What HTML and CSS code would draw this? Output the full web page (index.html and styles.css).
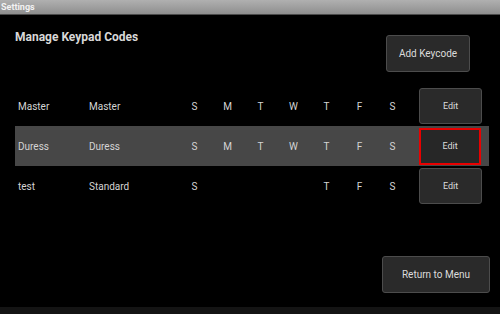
FILE: index.html
```html
<!DOCTYPE html>
<html lang="en">
<head>
    <meta charset="UTF-8">
    <title>Settings</title>
    <link rel="stylesheet" href="styles.css">
</head>
<body>
    <div class="screen">
        <div class="titlebar">Settings</div>

        <div class="header">
            <h1>Manage Keypad Codes</h1>
            <button class="btn btn-add">Add Keycode</button>
        </div>

        <!-- Lista de códigos -->
        <div class="codes">
            <div class="row">
                <span class="name">Master</span>
                <span class="type">Master</span>
                <span class="day">S</span><span class="day">M</span><span class="day">T</span><span class="day">W</span><span class="day">T</span><span class="day">F</span><span class="day">S</span>
                <button class="btn btn-edit">Edit</button>
            </div>
            <div class="row selected">
                <span class="name">Duress</span>
                <span class="type">Duress</span>
                <span class="day">S</span><span class="day">M</span><span class="day">T</span><span class="day">W</span><span class="day">T</span><span class="day">F</span><span class="day">S</span>
                <button class="btn btn-edit">Edit</button>
            </div>
            <div class="row">
                <span class="name">test</span>
                <span class="type">Standard</span>
                <span class="day">S</span><span class="day"></span><span class="day"></span><span class="day"></span><span class="day">T</span><span class="day">F</span><span class="day">S</span>
                <button class="btn btn-edit">Edit</button>
            </div>
        </div>

        <div class="footer">
            <button class="btn btn-return">Return to Menu</button>
        </div>

        <div class="bottombar"></div>
    </div>
</body>
</html>
```

FILE: styles.css
```css
body {
    margin: 0;
    background: #000;
    font-family: Roboto, "Liberation Sans", sans-serif;
    color: #d4d4d4;
}
.screen {
    width: 500px;
    height: 314px;
    display: flex;
    flex-direction: column;
    overflow: hidden;
}
.titlebar {
    height: 14px;
    line-height: 14px;
    border-bottom: 1px solid #4a4a4a;
    background: linear-gradient(#b0b0b0, #8e8e8e);
    color: #f2f2f2;
    font-size: 9px;
    font-weight: bold;
    padding-left: 1px;
}
.header {
    display: flex;
    justify-content: space-between;
    align-items: flex-start;
    padding: 15px 30px 0 15px;
}
h1 {
    margin: 0;
    font-size: 12px;
    line-height: 14px;
    font-weight: bold;
    color: #d8d8d8;
}
.btn {
    background: #2a2a2a;
    border: 1px solid #4c4c4c;
    border-radius: 3px;
    color: #dcdcdc;
    font-family: Roboto, "Liberation Sans", sans-serif;
    padding: 0;
    cursor: pointer;
}
.btn-add {
    margin-top: 5px;
    width: 84px;
    height: 37px;
    font-size: 10px;
}
.codes {
    margin: 14px 11px 0 15px;
}
.row {
    display: grid;
    grid-template-columns: 71px 89px repeat(7, 33px) 63px;
    align-items: center;
    height: 40px;
    padding-left: 3px;
    font-size: 10px;
}
.row .btn-edit {
    margin-left: 10px;
}
.day {
    text-align: center;
}
.selected {
    background: #474747;
}
.btn-edit {
    width: 63px;
    height: 36px;
    font-size: 9px;
}
.selected .btn-edit {
    width: 62px;
    height: 37px;
    border: 2px solid #e80000;
    border-radius: 0;
    background: #272727;
}
.footer {
    display: flex;
    justify-content: flex-end;
    padding-right: 10px;
    margin-top: 50px;
}
.btn-return {
    width: 108px;
    height: 37px;
    font-size: 10px;
}
.bottombar {
    margin-top: auto;
    height: 7px;
    background: #141414;
}
```
